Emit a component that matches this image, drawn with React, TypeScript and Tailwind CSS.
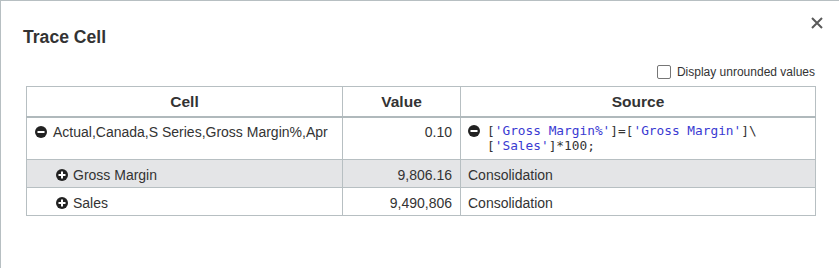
import React from "react";

const font = { fontFamily: '"Liberation Sans", Arial, sans-serif' };

function CircleIcon({ type }: { type: "plus" | "minus" }) {
  return (
    <svg width="12" height="12" viewBox="0 0 12 12" className="shrink-0">
      <circle cx="6" cy="6" r="6" fill="#222" />
      <rect x="2.5" y="5" width="7" height="2" fill="#fff" />
      {type === "plus" && <rect x="5" y="2.5" width="2" height="7" fill="#fff" />}
    </svg>
  );
}

const rows = [
  { label: "Gross Margin", value: "9,806.16", source: "Consolidation", shaded: true },
  { label: "Sales", value: "9,490,806", source: "Consolidation", shaded: false },
];

export default function App() {
  return (
    <div
      className="relative h-[268px] w-[839px] overflow-hidden border-l border-t border-[#b7bfc2] bg-white text-[#333]"
      style={font}
    >
      <button className="absolute right-[16px] top-[16px] p-0" aria-label="Close">
        <svg width="12" height="12" viewBox="0 0 12 12">
          <path d="M1 1L11 11M11 1L1 11" stroke="#5a5a5a" strokeWidth="2" />
        </svg>
      </button>

      <h1 className="pl-[22px] pt-[26px] text-[17.6px] font-bold leading-[21px] text-[#333]">Trace Cell</h1>

      <div className="mt-[17px] flex items-center justify-end pr-[24px]">
        <label className="flex items-center gap-[6px] text-[12px] leading-[14px] text-[#333]">
          <span className="h-[14px] w-[14px] rounded-[2px] border border-[#767676] bg-white" />
          Display unrounded values
        </label>
      </div>

      <table className="ml-[25px] mt-[7px] w-[789px] table-fixed border-collapse text-[14px]">
        <colgroup>
          <col className="w-[316px]" />
          <col className="w-[118px]" />
          <col className="w-[355px]" />
        </colgroup>
        <thead>
          <tr className="h-[30px] border-b-2 border-[#b0b9bc]">
            <th className="border border-[#b7bfc2] text-center text-[15.5px] font-bold">Cell</th>
            <th className="border border-[#b7bfc2] text-center text-[15.5px] font-bold">Value</th>
            <th className="border border-[#b7bfc2] text-center text-[15.5px] font-bold">Source</th>
          </tr>
        </thead>
        <tbody>
          <tr className="h-[43px]">
            <td className="border border-[#b7bfc2] px-[8px] pt-[6px] align-top">
              <div className="flex items-center gap-[6px] leading-[17px]">
                <CircleIcon type="minus" />
                <span>Actual,Canada,S Series,Gross Margin%,Apr</span>
              </div>
            </td>
            <td className="border border-[#b7bfc2] px-[8px] pt-[6px] text-right align-top leading-[17px]">0.10</td>
            <td className="border border-[#b7bfc2] pl-[7px] pt-[5px] align-top">
              <div className="flex items-start gap-[7px]">
                <span className="mt-[2px]">
                  <CircleIcon type="minus" />
                </span>
                <code
                  className="text-[12.8px] leading-[15px] text-[#333]"
                  style={{ fontFamily: '"DejaVu Sans Mono", "Liberation Mono", monospace' }}
                >
                  [<span className="text-[#3a3ad2]">'Gross Margin%'</span>]=[
                  <span className="text-[#3a3ad2]">'Gross Margin'</span>]\
                  <br />[<span className="text-[#3a3ad2]">'Sales'</span>]*100;
                </code>
              </div>
            </td>
          </tr>
          {rows.map((r) => (
            <tr key={r.label} className={r.shaded ? "h-[28px] bg-[#e4e5e7]" : "h-[28px]"}>
              <td className="border border-[#b7bfc2] pl-[29px] pt-[3px] leading-[17px]">
                <div className="flex items-center gap-[5px]">
                  <CircleIcon type="plus" />
                  <span>{r.label}</span>
                </div>
              </td>
              <td className="border border-[#b7bfc2] px-[8px] pt-[3px] text-right leading-[17px]">{r.value}</td>
              <td className="border border-[#b7bfc2] px-[7px] pt-[3px] leading-[17px]">{r.source}</td>
            </tr>
          ))}
        </tbody>
      </table>
    </div>
  );
}
